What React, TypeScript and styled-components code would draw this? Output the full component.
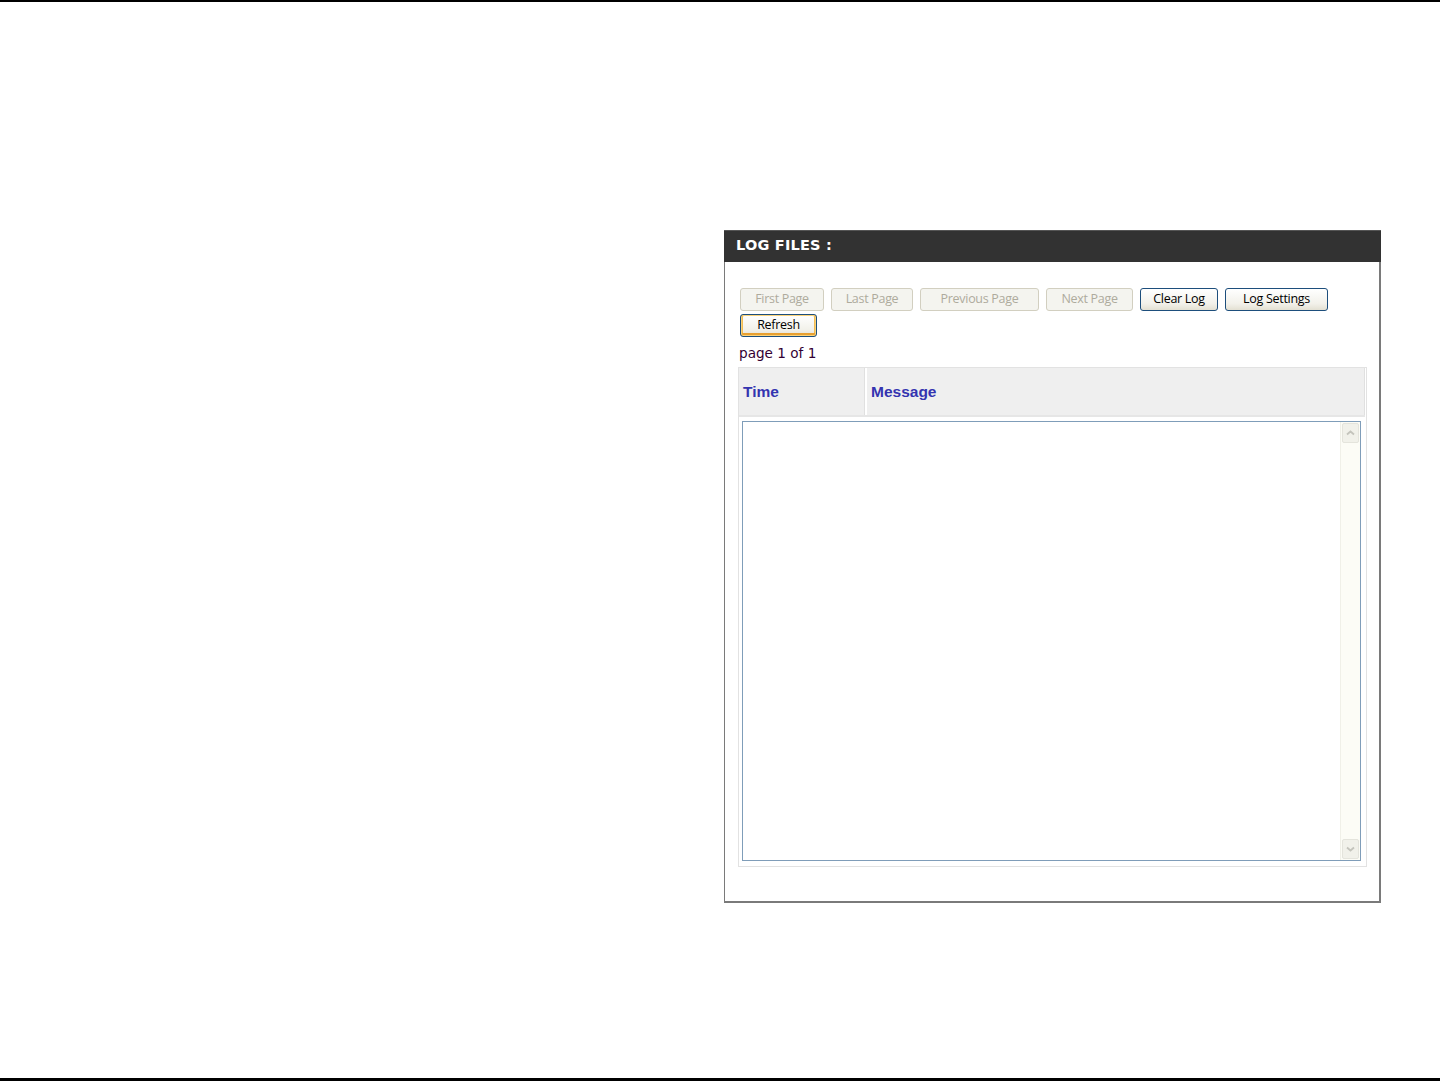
import React from "react";
import styled, { createGlobalStyle, css } from "styled-components";

const Global = createGlobalStyle`
  html, body { margin: 0; padding: 0; background: #fff; }
  body { font-family: "DejaVu Sans", Verdana, sans-serif; }
`;

const Page = styled.div`
  width: 1440px;
  height: 1081px;
  box-sizing: border-box;
  border-top: 2px solid #000;
  border-bottom: 3px solid #000;
  padding: 228px 0 0 724px;
`;

const Panel = styled.div`
  width: 657px;
  height: 673px;
  box-sizing: border-box;
  border: 1px solid #7a7a7a;
  border-right-width: 2px;
  border-bottom-width: 2px;
  border-top: none;
  display: flex;
  flex-direction: column;
`;

const Header = styled.div`
  height: 32px;
  background: #323232;
  margin: 0 -2px 0 -1px;
  border-top: 1px solid #555;
  box-sizing: border-box;
  color: #fff;
  font-family: "DejaVu Sans", Verdana, sans-serif;
  font-weight: bold;
  font-size: 14.5px;
  display: flex;
  align-items: center;
  padding: 0 0 3px 12px;
  letter-spacing: 0.2px;
`;

const Body = styled.div`
  padding: 26px 13px 0 13px;
  display: flex;
  flex-direction: column;
`;

const Buttons = styled.div`
  display: flex;
  flex-wrap: wrap;
  column-gap: 7px;
  row-gap: 3px;
  padding-left: 2px;
  width: 600px;
`;

const Btn = styled.button<{ $w: number; $disabled?: boolean; $focus?: boolean }>`
  width: ${(p) => p.$w}px;
  height: 23px;
  box-sizing: border-box;
  border-radius: 3px;
  font-family: "Open Sans", "DejaVu Sans", sans-serif;
  font-size: 12.5px;
  letter-spacing: -0.3px;
  padding: 0 0 2px;
  margin: 0;
  cursor: default;
  ${(p) =>
    p.$disabled
      ? css`
          border: 1px solid #d2cfc0;
          background: #f4f4ef;
          color: #aeab9d;
        `
      : css`
          border: 1px solid #1d4e7c;
          background: linear-gradient(#ffffff, #f2f1ea 70%, #e3e0d2);
          color: #000;
        `}
  ${(p) =>
    p.$focus &&
    css`
      box-shadow: inset 0 0 0 1px #f9d27a, inset 0 -2px 0 1px #e8a030, inset 1px 0 0 1px #f2bc55,
        inset -1px 0 0 1px #f2bc55;
    `}
`;

const PageInfo = styled.div`
  margin-top: 6px;
  padding-left: 1px;
  font-family: "DejaVu Sans", Verdana, sans-serif;
  font-size: 13.6px;
  color: #330033;
  height: 22px;
  line-height: 20px;
`;

const Table = styled.div`
  margin-top: 2px;
  width: 629px;
  box-sizing: border-box;
  border: 1px solid #e2e2e2;
  padding: 0 1px 1px 0;
  display: flex;
  flex-direction: column;
`;

const HeadRow = styled.div`
  display: grid;
  grid-template-columns: 126px 1fr;
  column-gap: 2px;
  height: 47px;
  border-bottom: 2px solid #e6e6e6;
`;

const HeadCell = styled.div`
  background: #efefef;
  border-right: 1px solid #e0e0e0;
  display: flex;
  align-items: center;
  padding-left: 4px;
  font-family: "Liberation Sans", Arial, sans-serif;
  font-weight: bold;
  font-size: 15.5px;
  color: #3434b0;
`;

const BodyCell = styled.div`
  padding: 4px 4px 4px 3px;
`;

const LogBox = styled.div`
  height: 440px;
  box-sizing: border-box;
  border: 1px solid #7f9db9;
  display: flex;
  justify-content: flex-end;
`;

const Scroll = styled.div`
  width: 19px;
  background: #fcfcf6;
  border-left: 1px solid #f0f0e8;
  display: flex;
  flex-direction: column;
  justify-content: space-between;
`;

const ScrollBtn = styled.div`
  height: 18px;
  margin: 1px;
  border: 1px solid #e4e4dc;
  border-radius: 2px;
  background: #f1f1ea;
  display: flex;
  align-items: center;
  justify-content: center;
`;

const Arrow = ({ down }: { down?: boolean }) => (
  <svg width="9" height="6" viewBox="0 0 9 6">
    <path
      d={down ? "M1 1.5 L4.5 4.5 L8 1.5" : "M1 4.5 L4.5 1.5 L8 4.5"}
      fill="none"
      stroke="#c4c4bc"
      strokeWidth="1.8"
    />
  </svg>
);

export default function App() {
  return (
    <>
      <Global />
      <Page>
        <Panel>
          <Header>LOG FILES :</Header>
          <Body>
            <Buttons>
              <Btn $w={84} $disabled>First Page</Btn>
              <Btn $w={82} $disabled>Last Page</Btn>
              <Btn $w={119} $disabled>Previous Page</Btn>
              <Btn $w={87} $disabled>Next Page</Btn>
              <Btn $w={78}>Clear Log</Btn>
              <Btn $w={103}>Log Settings</Btn>
              <Btn $w={77} $focus>Refresh</Btn>
            </Buttons>
            <PageInfo>page 1 of 1</PageInfo>
            <Table>
              <HeadRow>
                <HeadCell>Time</HeadCell>
                <HeadCell>Message</HeadCell>
              </HeadRow>
              <BodyCell>
                <LogBox>
                  <Scroll>
                    <ScrollBtn>
                      <Arrow />
                    </ScrollBtn>
                    <ScrollBtn>
                      <Arrow down />
                    </ScrollBtn>
                  </Scroll>
                </LogBox>
              </BodyCell>
            </Table>
          </Body>
        </Panel>
      </Page>
    </>
  );
}
